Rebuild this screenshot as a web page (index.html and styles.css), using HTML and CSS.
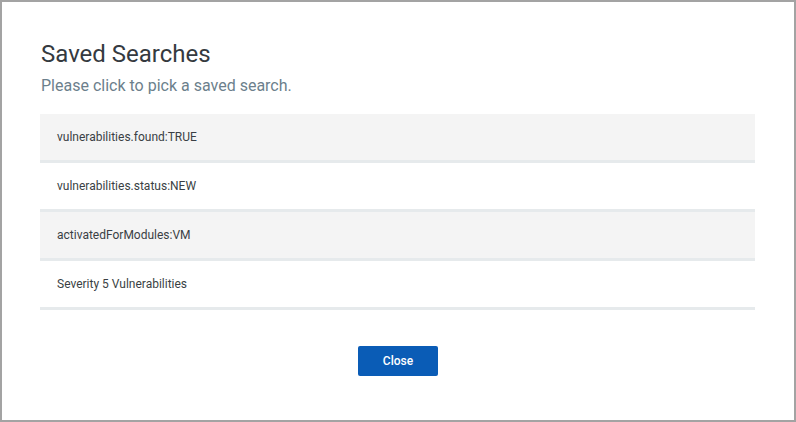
FILE: index.html
```html
<!DOCTYPE html>
<html>
<head>
<meta charset="utf-8">
<link rel="stylesheet" href="styles.css">
</head>
<body>
<div class="dialog">
  <h1 class="title">Saved Searches</h1>
  <p class="subtitle">Please click to pick a saved search.</p>
  <ul class="list">
    <li class="item odd">vulnerabilities.found:TRUE</li>
    <li class="item">vulnerabilities.status:NEW</li>
    <li class="item odd">activatedForModules:VM</li>
    <li class="item">Severity 5 Vulnerabilities</li>
  </ul>
  <div class="actions">
    <button class="btn">Close</button>
  </div>
</div>
</body>
</html>
```

FILE: styles.css
```css
html, body {
  margin: 0;
  padding: 0;
  background: #ffffff;
}
.dialog {
  box-sizing: border-box;
  width: 796px;
  height: 422px;
  border: 2px solid #a3a3a3;
  padding: 38px 39px 0 38px;
  font-family: Roboto, "Liberation Sans", sans-serif;
}
.title {
  margin: 0 0 0 1px;
  font-size: 24px;
  line-height: 28px;
  font-weight: 400;
  color: #353a3f;
}
.subtitle {
  margin: 8px 0 0 1px;
  font-size: 16px;
  line-height: 19px;
  color: #6c7f8c;
}
.list {
  list-style: none;
  margin: 19px 0 0 0;
  padding: 0;
}
.item {
  padding: 15px 17px 15px 17px;
  font-size: 12px;
  line-height: 16px;
  color: #3a3f44;
  border-bottom: 3px solid #e6eaec;
  background: #ffffff;
}
.item.odd {
  background: #f4f4f4;
}
.actions {
  display: flex;
  justify-content: center;
  margin-top: 36px;
  padding-left: 1px;
}
.btn {
  width: 80px;
  height: 30px;
  border: none;
  border-radius: 2px;
  background: #0a5cb6;
  color: #ffffff;
  font-family: Roboto, "Liberation Sans", sans-serif;
  font-size: 12px;
  font-weight: 500;
  padding: 0;
}
```
